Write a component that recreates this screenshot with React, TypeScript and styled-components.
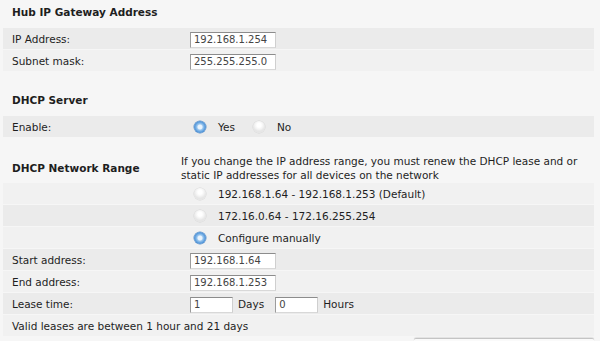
import styled, { createGlobalStyle } from "styled-components";

const GlobalStyle = createGlobalStyle`
  body {
    margin: 0;
    background: #f6f6f6;
    font-family: "DejaVu Sans", Verdana, sans-serif;
    font-size: 10.5px;
    color: #1e1e1e;
  }
`;

const Page = styled.div`
  width: 591px;
  padding-left: 3px;
`;

const Section = styled.div<{ $top: number }>`
  margin-top: ${(p) => p.$top}px;
`;

const Title = styled.div`
  font-weight: bold;
  line-height: 14px;
  padding: 5px 9px 9px;
`;

const RangeHead = styled.div`
  display: flex;
  align-items: center;
  padding-bottom: 1px;
`;

const RangeTitle = styled.div`
  width: 169px;
  padding-left: 9px;
  font-weight: bold;
`;

const Note = styled.p`
  margin: 0;
  line-height: 14px;
  flex: 1;
`;

const Row = styled.div<{ $dark?: boolean }>`
  display: flex;
  align-items: center;
  height: 21px;
  margin-bottom: 1px;
  white-space: nowrap;
  background: ${(p) => (p.$dark ? "#ebebeb" : "#f1f1f1")};
`;

const Label = styled.div`
  width: 178px;
  padding-left: 9px;
`;

const Field = styled.input<{ $w?: number }>`
  box-sizing: border-box;
  width: ${(p) => p.$w ?? 86}px;
  height: 16px;
  margin-top: 2px;
  padding: 0 3px;
  border: 1px solid;
  border-color: #8c8c8c #cfcfcf #d8d8d8 #9c9c9c;
  background: #fff;
  font-family: inherit;
  font-size: 10px;
  color: #444;
  outline: none;
`;

const Unit = styled.span`
  margin: 0 11px 0 5px;
`;

const Radio = styled.span<{ $on?: boolean }>`
  display: inline-block;
  width: 12px;
  height: 12px;
  border-radius: 50%;
  margin: 0 12px 0 4px;
  box-sizing: border-box;
  background: ${(p) =>
    p.$on
      ? "radial-gradient(circle at 50% 50%, #eaf4fd 0 2px, #9cc7ee 3px, #5c9ede 5px, #4a8bd0 6px)"
      : "radial-gradient(circle at 50% 35%, #ffffff 0 2px, #f4f4f4 4px, #e6e6e6 6px)"};
  box-shadow: ${(p) =>
    p.$on ? "0 0 0 0.5px #5a8fc7" : "0 0 0 0.5px #d6d6d6"};
`;

const Choice = styled.span`
  margin-right: 14px;
`;

const Footer = styled.div`
  display: flex;
  justify-content: flex-end;
  margin-top: 2px;
`;

const Edge = styled.div`
  width: 180px;
  height: 6px;
  border-top: 1px solid #c4c4c4;
  border-radius: 2px 2px 0 0;
  box-shadow: 0 -1px 1px #e2e2e2;
  background: #fafafa;
`;

export default function App() {
  return (
    <>
      <GlobalStyle />
      <Page>
        <Section $top={0}>
          <Title>Hub IP Gateway Address</Title>
          <Row $dark>
            <Label>IP Address:</Label>
            <Field defaultValue="192.168.1.254" />
          </Row>
          <Row>
            <Label>Subnet mask:</Label>
            <Field defaultValue="255.255.255.0" />
          </Row>
        </Section>

        <Section $top={17}>
          <Title>DHCP Server</Title>
          <Row $dark>
            <Label>Enable:</Label>
            <Radio $on />
            <Choice>Yes</Choice>
            <Radio />
            <span>No</span>
          </Row>
        </Section>

        <Section $top={17}>
          <RangeHead>
            <RangeTitle>DHCP Network Range</RangeTitle>
            <Note>
              If you change the IP address range, you must renew the DHCP lease
              and or static IP addresses for all devices on the network
            </Note>
          </RangeHead>
          <Row>
            <Label />
            <Radio />
            <span>192.168.1.64 - 192.168.1.253 (Default)</span>
          </Row>
          <Row $dark>
            <Label />
            <Radio />
            <span>172.16.0.64 - 172.16.255.254</span>
          </Row>
          <Row>
            <Label />
            <Radio $on />
            <span>Configure manually</span>
          </Row>
          <Row $dark>
            <Label>Start address:</Label>
            <Field defaultValue="192.168.1.64" />
          </Row>
          <Row>
            <Label>End address:</Label>
            <Field defaultValue="192.168.1.253" />
          </Row>
          <Row $dark>
            <Label>Lease time:</Label>
            <Field $w={43} defaultValue="1" />
            <Unit>Days</Unit>
            <Field $w={43} defaultValue="0" />
            <Unit>Hours</Unit>
          </Row>
          <Row>
            <Label>Valid leases are between 1 hour and 21 days</Label>
          </Row>
        </Section>
        <Footer>
          <Edge />
        </Footer>
      </Page>
    </>
  );
}
